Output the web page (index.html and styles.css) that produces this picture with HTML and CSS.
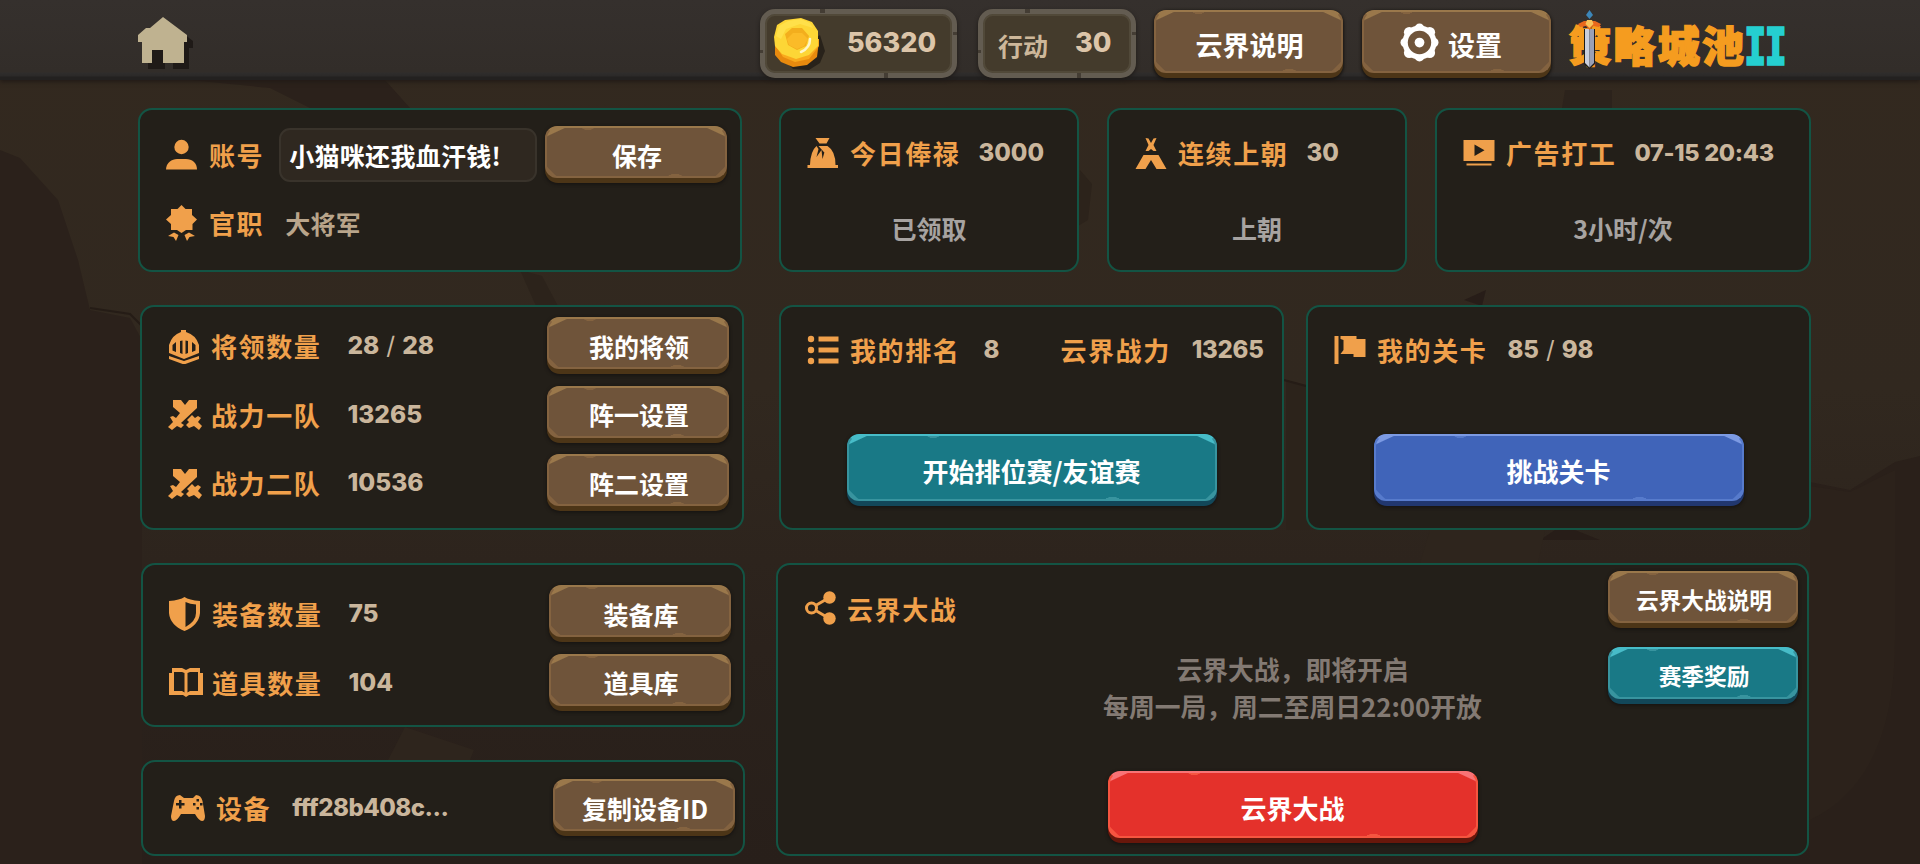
FILE: index.html
```html
<!DOCTYPE html>
<html lang="zh-CN">
<head>
    <meta charset="UTF-8">
    <meta name="viewport" content="width=device-width, initial-scale=1.0">
    <title>策略城池II</title>
    <link rel="stylesheet" href="styles.css">
</head>
<body>

<!-- rock wall -->
<svg class="wall" viewBox="0 0 1920 864" preserveAspectRatio="none">
    <path fill="#2b211b" d="M0 150 20 158 58 200 78 260 90 310 130 318 142 340V864H0z"/>
    <path fill="#2b211b" d="M190 80H385L410 108H310L270 88z"/>
    <path fill="#2c231b" d="M520 270 542 276 558 306H536z"/>
    <path fill="#2c231b" d="M1080 170 1092 184 1088 220 1078 226zM1286 380 1310 386V530H1286z"/>
    <path fill="#2a201a" d="M1810 482 1850 490 1895 462 1920 456V864H1810z"/>
    <path fill="#2c221b" d="M1810 486 1850 492 1895 470V640Q1895 780 1810 820z"/>
    <path fill="#271d18" d="M1464 300 1486 290 1482 306zM1555 530 1570 528 1600 540H1540z"/>
    <path fill="#2c231c" d="M1565 90H1612V108H1562z"/>
    <path fill="#2e251d" d="M405 727 474 750 470 760H388zM1430 530H1545L1538 563H1420z"/>
    <path fill="none" stroke="#251c16" stroke-width="2" d="M90 308 130 314 142 326M1284 380 1306 386"/>
</svg>

<header class="topbar">
    <svg class="home" width="56" height="54" viewBox="0 0 56 54">
        <path fill="#1f1a17" d="M5 23 11 18 30 5 55 24V31H51V52H35V39H27V52H10V32H5z"/>
        <path fill="#bfb290" d="M0 18 8 11 12 11 25 0 49 18V25H46V46H25V33H14V46H4V25H0z"/>
    </svg>

    <div class="stat gold">
        <svg width="54" height="54" viewBox="0 0 54 54">
            <path fill="#28221a" d="M12 44 20 52 36 53 47 46 52 34 47 18z"/>
            <path fill="#e88a0e" d="M2 22V38L8 45 20 50 34 48 44 40 46 24z"/>
            <path fill="#f9a91c" d="M2 28 10 40 22 45 36 42 46 29V22H2z"/>
            <path fill="#fdd636" d="M1 20 4 8 12 3 28 1 39 5 45 14 45 29 36 38 23 42 9 37 2 29z"/>
            <path fill="#ffe04a" d="M3 19 6 9 15 4 28 2 37 6 40 11 27 7 13 12 8 22z"/>
            <path fill="#f3ae1d" d="M12 17 19 11H29L36 19 33 29 24 33 15 28z"/>
            <path fill="#fbbb28" d="M14 22 20 16H29L35 22 31 29 24 32 16 28z"/>
            <path fill="none" stroke="#fff6c8" stroke-width="2.500" stroke-linecap="round" d="M37 22Q37 31 28 35"/>
        </svg>
        <span class="num">56320</span>
    </div>
    <div class="stat action">
        <span class="stat-name">行动</span>
        <span class="num">30</span>
    </div>
    <button class="btn brown top-btn">云界说明</button>
    <button class="btn brown top-btn with-icon">
        <svg width="39" height="39" viewBox="-20 -20 40 40">
            <g fill="#fff">
                <circle r="17.500"/>
                <circle cy="-14.500" r="5"/><circle cy="14.500" r="5"/>
                <circle cx="-14.500" r="5"/><circle cx="14.500" r="5"/>
                <circle cx="-10.500" cy="-10.500" r="5.500"/><circle cx="10.500" cy="-10.500" r="5.500"/>
                <circle cx="-10.500" cy="10.500" r="5.500"/><circle cx="10.500" cy="10.500" r="5.500"/>
            </g>
            <circle r="12" fill="#6f543a"/>
            <circle r="5" fill="#fff"/>
        </svg>
        设置
    </button>

    <svg class="logo" width="220" height="64" viewBox="0 0 220 64">
        <text class="logo-cn" x="-1" y="52.500" textLength="175">策略城池</text>
        <text class="logo-num" x="175" y="55" textLength="41" lengthAdjust="spacingAndGlyphs">II</text>
        <path fill="#3c86b8" d="M19.500 1 23 6 19.500 10 16 6z"/>
        <path fill="#1d1a17" d="M14 20H25V55L19.500 60 14 55z"/>
        <path fill="#c9cedd" d="M15 20H19.500V58.500L15 54z"/>
        <path fill="#9aa0b6" d="M19.500 20H24V54L19.500 58.500z"/>
        <path fill="#e8681c" d="M8 15 14 12H25L31 15 29 18 23 17 19.500 21 16 17 10 18z"/>
        <path fill="#f7c25a" d="M17 11H22L23.500 15 19.500 19 15.500 15z"/>
    </svg>
</header>

<main class="board">
    <div class="col-left">
        <section class="panel account">
            <div class="row">
                <svg class="icon" viewBox="0 0 32 36"><circle cx="15.500" cy="10" r="7.200"/><path d="M0 32.500C0 26 6 22 11 22H20C26 22 31 26 31 32.500z"/></svg>
                <span class="label">账号</span>
                <input class="name-input" type="text" value="小猫咪还我血汗钱!">
                <button class="btn brown">保存</button>
            </div>
            <div class="row">
                <svg class="icon" viewBox="0 0 32 36"><path d="M15.500 0 19.500 4H26V10L31 14.500 26.500 19V25H20L15.500 28 11 25H5V19L0 14.500 5 10V4H11.500zM2 31 8 27.500 12.500 30 10 36 7.500 32zM29 31 23 27.500 18.500 30 21 36 23.500 32z"/></svg>
                <span class="label">官职</span>
                <span class="rank">大将军</span>
            </div>
        </section>

        <section class="panel troops">
            <div class="row">
                <svg class="icon" viewBox="0 0 32 36"><path fill-rule="evenodd" d="M13 2H18V4Q28 7 31 17V25L16 31 1 25V17Q4 7 13 4zM4.500 17V22.500L8 24V14zM12 13V25L14.500 26V12.500zM17.500 12.500V26L20 25V13zM24 14V24L27.500 22.500V17z"/><path d="M1 28 16 33 31 28V31L16 36.500 1 31z"/></svg>
                <span class="label">将领数量</span>
                <span class="value wide">28<i>/</i>28</span>
                <button class="btn brown">我的将领</button>
            </div>
            <div class="row">
                <svg class="icon swords" viewBox="0 0 34 36"><use href="#swords"/></svg>
                <span class="label">战力一队</span>
                <span class="value">13265</span>
                <button class="btn brown">阵一设置</button>
            </div>
            <div class="row">
                <svg class="icon swords" viewBox="0 0 34 36"><use href="#swords"/></svg>
                <span class="label">战力二队</span>
                <span class="value">10536</span>
                <button class="btn brown">阵二设置</button>
            </div>
        </section>

        <section class="panel goods">
            <div class="row">
                <svg class="icon" viewBox="0 0 32 36"><path fill-rule="evenodd" d="M15.500 1Q20 4 31 5V17Q30 29 15.500 35 1 29 0 17V5Q11 4 15.500 1zM16.500 6V31Q27 25 27 17V8.500Q21 8 16.500 6z"/></svg>
                <span class="label">装备数量</span>
                <span class="value">75</span>
                <button class="btn brown">装备库</button>
            </div>
            <div class="row">
                <svg class="icon book" viewBox="0 0 34 36"><path fill-rule="evenodd" d="M3 4H13L17 6 21 4H31V9H34V31H20L17 33 14 31H0V9H3zM5 8V27H13L15.500 28.500V9L13 8zM18.500 9V28.500L21 27H29V8H21z"/></svg>
                <span class="label">道具数量</span>
                <span class="value">104</span>
                <button class="btn brown">道具库</button>
            </div>
        </section>

        <section class="panel device">
            <div class="row">
                <svg class="icon" viewBox="0 0 34 36"><path fill-rule="evenodd" d="M9 5 13 8H22L25 5Q30 5 31.500 11L34 26Q34 31 31 31 28 31 24 24H10Q6 31 3 31 0 31 0 26L3 11Q4 5 9 5zM8 10V13H5V15.500H8V18.500H10.500V15.500H13.500V13H10.500V10zM25.500 9V11.500H28V9zM25.500 17V19.500H28V17zM22 13V15.500H24.500V13zM29 13V15.500H31.500V13z"/></svg>
                <span class="label">设备</span>
                <span class="value">fff28b408c...</span>
                <button class="btn brown">复制设备ID</button>
            </div>
        </section>
    </div>

    <div class="col-right">
        <div class="cards">
            <section class="panel card">
                <div class="head">
                    <svg class="icon" viewBox="0 0 31 36"><path d="M8 3H22L19 8.500H12zM11 11H20Q28 16 28 30H30.500V33H0V30H2.500Q3 16 9 11L11 14 9 22 14 15 15 24 17 17 19 20z"/></svg>
                    <span class="label">今日俸禄</span>
                    <span class="value">3000</span>
                </div>
                <p class="foot">已领取</p>
            </section>
            <section class="panel card">
                <div class="head">
                    <svg class="icon" viewBox="0 0 31 36"><path d="M10 3 13 3.500 15.500 8 18 3.500 21 3 18 10 21 16H18L15.500 14 13 16H10L13 10zM8 20H23L31 34H21L15.500 25 10 34H0z"/></svg>
                    <span class="label">连续上朝</span>
                    <span class="value">30</span>
                </div>
                <p class="foot">上朝</p>
            </section>
            <section class="panel card card-ad">
                <div class="head">
                    <svg class="icon" viewBox="0 0 31 36"><path fill-rule="evenodd" d="M0 5H31V26H0zM11 9.500V21L21 15.200z"/><path d="M3 28.500H28V30.500H3z"/></svg>
                    <span class="label">广告打工</span>
                    <span class="value date">07-15 20:43</span>
                </div>
                <p class="foot">3小时/次</p>
            </section>
        </div>

        <div class="fights">
            <section class="panel fight">
                <div class="head">
                    <svg class="icon" viewBox="0 0 31 36"><circle cx="3.500" cy="7" r="3.200"/><circle cx="3.500" cy="18" r="3.200"/><circle cx="3.500" cy="29" r="3.200"/><path d="M11 4.500H31V9.500H11zM11 15.500H31V20.500H11zM11 26.500H31V31.500H11z"/></svg>
                    <span class="label">我的排名</span>
                    <span class="value rank-no">8</span>
                    <span class="label">云界战力</span>
                    <span class="value power">13265</span>
                </div>
                <button class="btn big teal">开始排位赛/友谊赛</button>
            </section>
            <section class="panel fight">
                <div class="head">
                    <svg class="icon" viewBox="0 0 31 36"><path d="M0 4H4V32H0zM6 4H22V7H31V25H19V22H6L9 18V8L6 7z"/></svg>
                    <span class="label">我的关卡</span>
                    <span class="value wide">85<i>/</i>98</span>
                </div>
                <button class="btn big blue">挑战关卡</button>
            </section>
        </div>

        <section class="panel war">
            <div class="war-main">
                <div class="head">
                    <svg class="icon" viewBox="0 0 31 36"><circle cx="25" cy="7.500" r="6.200"/><circle cx="25" cy="28.500" r="6.200"/><path fill="none" stroke="#f0a04b" stroke-width="3" d="M24 8 12 15M12 21 24 28"/><circle cx="7" cy="18" r="5" fill="none" stroke="#f0a04b" stroke-width="3"/></svg>
                    <span class="label">云界大战</span>
                </div>
                <p class="notice">云界大战，即将开启<br>每周一局，周二至周日22:00开放</p>
                <button class="btn big red">云界大战</button>
            </div>
            <div class="war-side">
                <button class="btn brown">云界大战说明</button>
                <button class="btn teal">赛季奖励</button>
            </div>
        </section>
    </div>
</main>

<svg class="defs">
    <symbol id="swords" viewBox="0 0 34 36">
        <path d="M5 4H13L17 9 21 4H29V12L13 27 16 29 13 32 9 30 4 34 0 31 5 26 2 21 5 20 8 22 12 17 5 11zM19 24 24 19 27 22 30 20 33 22 30 26 34 30 31 34 26 30 21 32 18 29 21 26z"/>
    </symbol>
</svg>

</body>
</html>
```
FILE: styles.css
```css
* {
    box-sizing: border-box;
}
body {
    margin: 0;
    height: 864px;
    overflow: hidden;
    position: relative;
    background: linear-gradient(#33291f, #31281f 45%, #2b221c 75%, #281f1a);
    font-family: "Noto Sans CJK SC", sans-serif;
    font-size: 25px;
    font-weight: bold;
    color: #fff;
}
p {
    margin: 0;
}
.wall {
    position: absolute;
    left: 0;
    top: 0;
    width: 1920px;
    height: 864px;
    z-index: -1;
}
.defs {
    display: none;
}

/* top bar */
.topbar {
    display: flex;
    align-items: flex-start;
    height: 80px;
    padding: 9px 0 0 138px;
    background: linear-gradient(#35302d, #322d29 72px, #2f2d2c 73px, #2b2928 76px, #232120 77px);
    box-shadow: 0 2px 4px #221b17;
}
.home {
    margin: 8px 566px 0 0;
}
.stat {
    position: relative;
    display: flex;
    align-items: center;
    height: 69px;
    border: 5px solid #635c51;
    border-radius: 15px;
    background: #443b2c;
    box-shadow: inset 0 0 0 2px #514939, 0 2px 4px #1f1b18;
}
/* cracks in the stone frame */
.stat::after {
    content: "";
    position: absolute;
    inset: -5px;
    background:
        linear-gradient(#443d34, #443d34) 31% 0 / 5px 4px,
        linear-gradient(#443d34, #443d34) 64% 100% / 4px 5px,
        linear-gradient(#443d34, #443d34) 100% 35% / 4px 3px,
        linear-gradient(#443d34, #443d34) 0 62% / 3px 3px;
    background-repeat: no-repeat;
}
.gold {
    width: 197px;
    padding-left: 8px;
    margin-right: 21px;
}
.gold .num {
    margin-left: 20px;
}
.action {
    width: 158px;
    padding-left: 15px;
    margin-right: 18px;
}
.action .num {
    margin-left: 27px;
}
.stat-name {
    color: #cdb79a;
    padding-top: 2px;
}
.num {
    font: 800 27px/1 Inter, sans-serif;
    color: #dcc5a9;
    padding-bottom: 2px;
}

/* stone buttons */
.btn {
    --face: #6f543a;
    --edge: #846340;
    --shine: #9a784b;
    --side: #4c3517;
    position: relative;
    isolation: isolate;
    width: 182px;
    height: 57px;
    padding: 1px 0 0 2px;
    border: none;
    border-radius: 13px;
    background: var(--side);
    box-shadow: 0 1px 3px 1px #191613;
    color: #fff;
    font: inherit;
    line-height: 1;
    flex: none;
}
.btn::before {
    content: "";
    position: absolute;
    inset: 0 0 5px;
    z-index: -1;
    border: 2px solid var(--edge);
    border-top-color: var(--shine);
    border-radius: 12px;
    background:
        linear-gradient(155deg, var(--shine) 7px, transparent 8px),
        linear-gradient(-155deg, var(--shine) 7px, transparent 8px),
        radial-gradient(ellipse 6px 2px at 23% 0, var(--edge) 90%, transparent),
        radial-gradient(ellipse 7px 2px at 72% 100%, var(--edge) 90%, transparent),
        linear-gradient(45deg, var(--edge) 6px, transparent 7px),
        linear-gradient(-45deg, var(--edge) 6px, transparent 7px),
        var(--face);
}
.teal {
    --face: #197986;
    --edge: #38949f;
    --shine: #47bcc8;
    --side: #124759;
}
.blue {
    --face: #4064b9;
    --edge: #577bcc;
    --shine: #7c9ae3;
    --side: #21376f;
}
.red {
    --face: #e4312b;
    --edge: #f65540;
    --shine: #f87376;
    --side: #68170b;
}
.top-btn {
    width: 189px;
    height: 68px;
    margin: 1px 19px 0 0;
    font-size: 27px;
}
.with-icon {
    display: flex;
    align-items: center;
    justify-content: center;
    gap: 9px;
    padding: 0 11px 0 0;
}
.with-icon svg {
    margin-top: -3px;
}
.big {
    width: 370px;
    height: 72px;
    padding-left: 0;
    font-size: 26px;
}

.logo {
    overflow: visible;
}
.logo-cn {
    font-size: 42px;
    font-weight: 900;
    fill: #f59c1f;
    stroke: #f59c1f;
    stroke-width: 1.6px;
}
.logo-num {
    font: bold 53px "Liberation Mono", monospace;
    fill: #25cfd0;
    stroke: #25cfd0;
    stroke-width: 3.5px;
}

/* panels */
.board {
    display: flex;
    gap: 34px;
    padding: 28px 0 0 138px;
}
.col-left {
    width: 607px;
}
.col-right {
    width: 1032px;
}
.panel {
    border: 2px solid #135444;
    border-radius: 14px;
    background: #231f19;
}
.col-left .panel {
    width: 604px;
    padding-left: 26px;
}
.row {
    display: flex;
    align-items: center;
    height: 57px;
}
.row .btn {
    margin-left: auto;
    margin-right: 13px;
}
.icon {
    width: 32px;
    height: 36px;
    margin-right: 11px;
    fill: #f0a04b;
    flex: none;
}
.swords,
.book {
    width: 34px;
    margin-right: 9px;
}
.label {
    padding-top: 1px;
    font-size: 26px;
    letter-spacing: 1.6px;
    line-height: 1;
    color: #f0a04b;
    white-space: nowrap;
}
.value {
    margin-left: 26px;
    font: 800 24.5px/1 Inter, sans-serif;
    color: #cab69c;
    white-space: nowrap;
}
.value i {
    font-style: normal;
    font-weight: normal;
    margin: 0 7px;
}
.account {
    height: 164px;
    padding-top: 16px;
}
.account .row + .row {
    margin-top: 11px;
}
.name-input {
    width: 258px;
    height: 54px;
    margin-left: 15px;
    padding: 0 8px;
    border: 2px solid #39332b;
    border-radius: 11px;
    background: #2f2820;
    color: #fff;
    font: inherit;
    letter-spacing: 0.3px;
}
.rank {
    margin-left: 21px;
    padding-top: 1px;
    color: #b9a58b;
    letter-spacing: 0.3px;
    line-height: 1;
}
.troops {
    height: 225px;
    margin: 33px 0 0 2px;
    padding-top: 10px;
}
.troops .row + .row {
    margin-top: 11.5px;
}
.goods {
    height: 164px;
    margin: 33px 0 0 3px;
    padding-top: 20px;
}
.goods .row + .row {
    margin-top: 11.5px;
}
.goods .btn {
    margin-right: 12px;
}
.device {
    height: 96px;
    margin: 33px 0 0 3px;
    padding-top: 17px;
}
.device .icon {
    width: 34px;
    margin-left: 2px;
}
.device .value {
    margin-left: 21px;
    font-size: 24px;
    letter-spacing: -0.5px;
}
.device .btn {
    margin-right: 8px;
}

.cards {
    display: flex;
    gap: 28px;
}
.card {
    width: 300px;
    height: 164px;
}
.card-ad {
    width: 376px;
}
.head {
    display: flex;
    align-items: center;
    height: 86px;
    padding-left: 26px;
}
.head .label {
    padding: 0 0 1px;
}
.head .value {
    margin-left: 18px;
    padding-bottom: 1px;
    font-size: 24px;
}
.head .date {
    font-size: 23.5px;
    letter-spacing: -0.3px;
}
.foot {
    line-height: 64px;
    text-align: center;
    color: #a7a3a1;
}
.fights {
    display: flex;
    gap: 22px;
    margin-top: 33px;
}
.fight {
    width: 505px;
    height: 225px;
}
.fight .btn {
    display: block;
    margin: 41px auto 0;
}
.head .wide {
    margin-left: 20px;
}
.head .rank-no {
    width: 15px;
    margin: 0 62px 0 23px;
}
.head .power {
    margin-left: 21px;
    letter-spacing: -0.3px;
}
.war {
    display: grid;
    width: 1033px;
    height: 293px;
    margin: 33px 0 0 -3px;
}
.war-main,
.war-side {
    grid-area: 1 / 1;
}
.war-main {
    text-align: center;
}
.war .label {
    padding: 1px 0 0;
}
.notice {
    margin-top: -1px;
    font-size: 25.8px;
    line-height: 37px;
    color: #837a73;
}
.war-main .btn {
    margin-top: 47px;
}
.war-side {
    display: flex;
    flex-direction: column;
    justify-self: end;
    align-self: start;
    gap: 19px;
    padding: 6px 9px 0 0;
}
.war-side .btn {
    width: 190px;
    font-size: 22.7px;
}
```
